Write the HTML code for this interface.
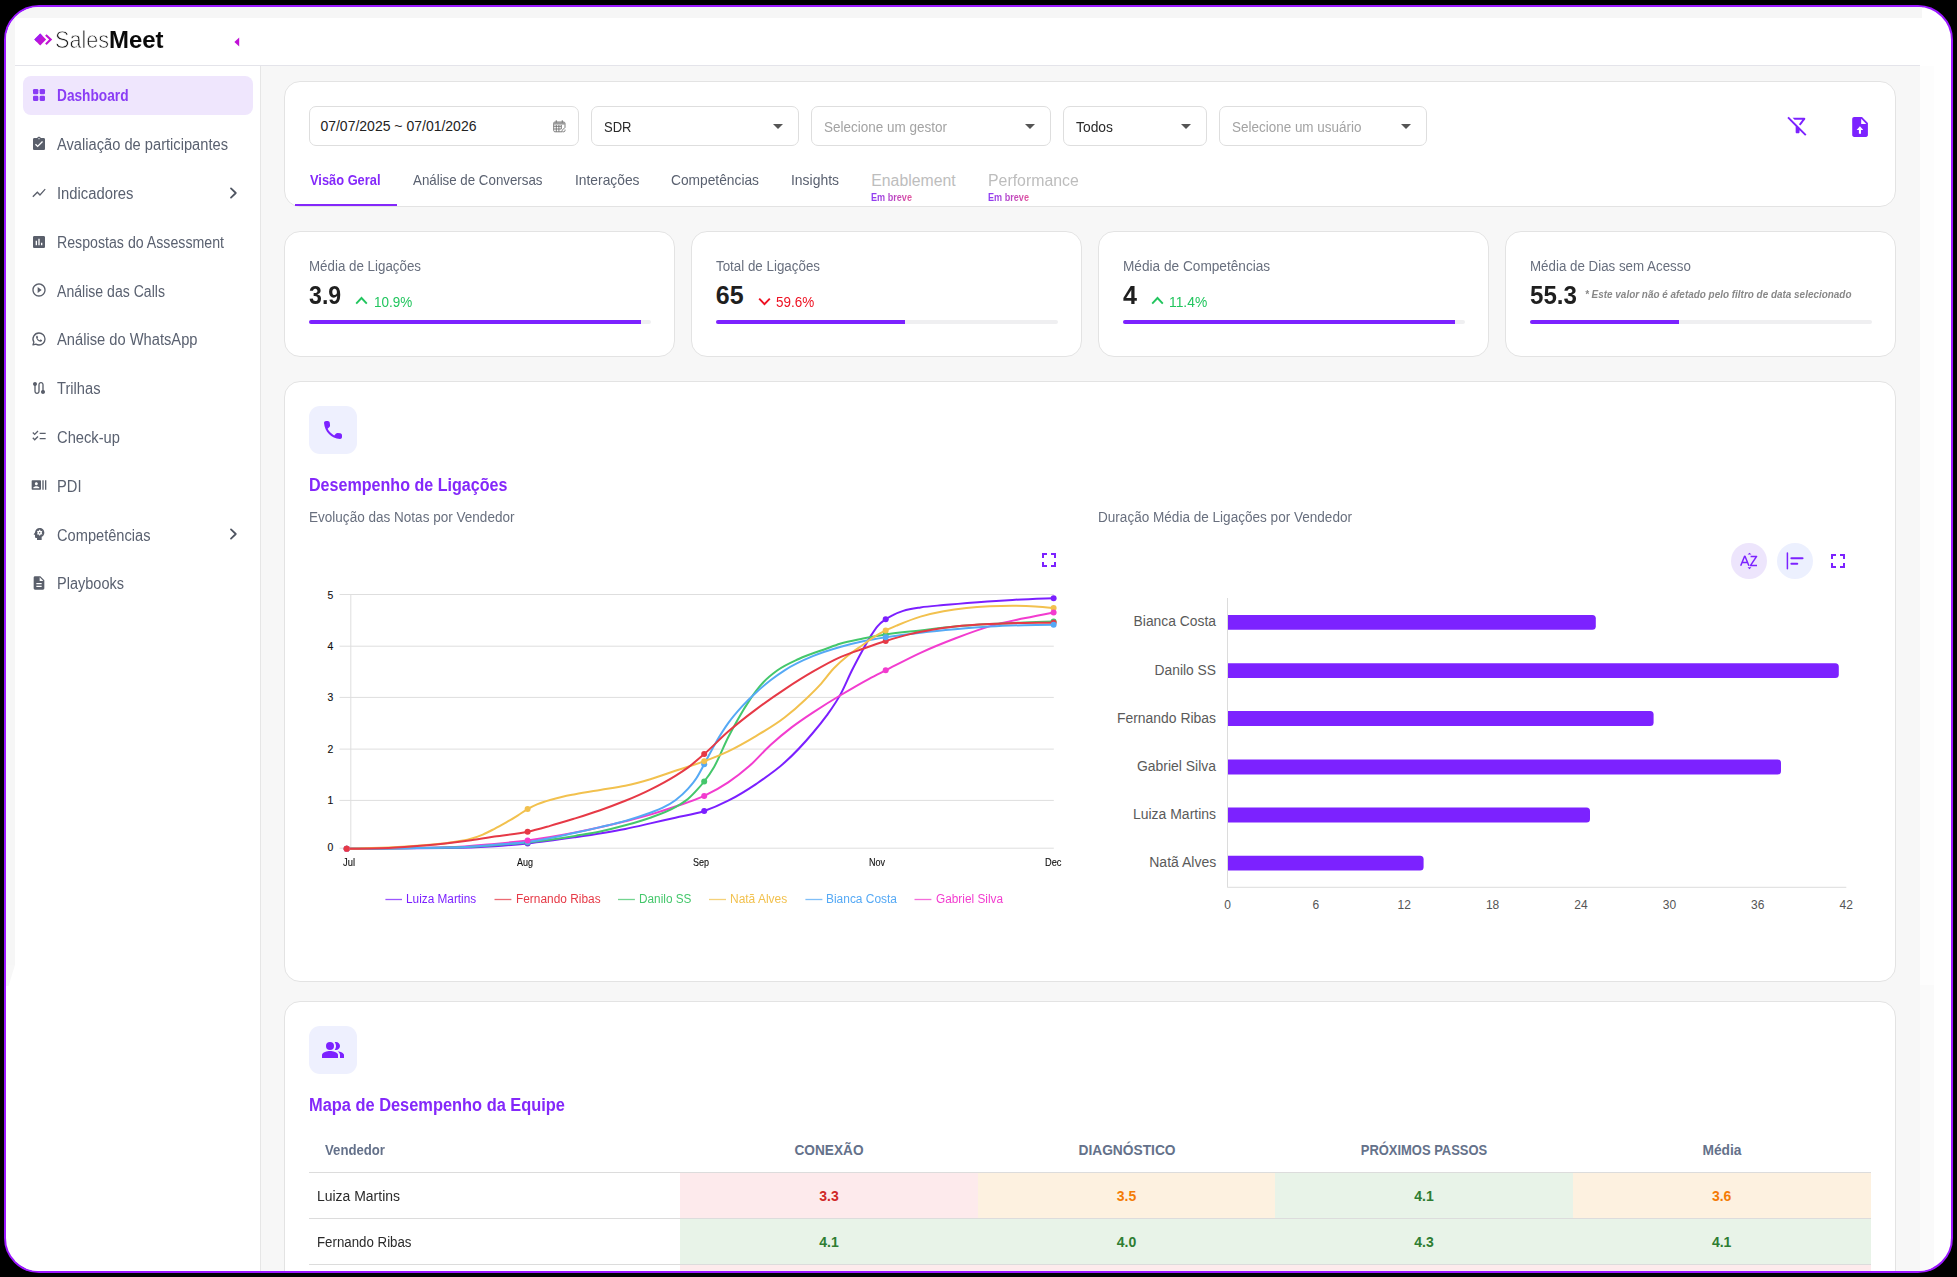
<!DOCTYPE html>
<html lang="pt-BR"><head><meta charset="utf-8"><title>SalesMeet - Dashboard</title>
<style>
*{box-sizing:border-box;margin:0;padding:0}
html,body{width:1957px;height:1277px;overflow:hidden;background:#000;font-family:"Liberation Sans",sans-serif;}
#frame{position:absolute;left:4px;top:5px;width:1949px;height:1268px;border:2px solid #9b18ff;border-radius:35px;background:#fff;overflow:hidden;}
#page{position:absolute;left:-6px;top:-7px;width:1957px;height:1277px;}
.abs{position:absolute}
.t{position:absolute;white-space:nowrap;display:inline-block}
.card{position:absolute;background:#fff;border:1px solid #e3e3e3;border-radius:16px}
.sel{position:absolute;top:106px;height:40px;border:1px solid #dedede;border-radius:7px;background:#fff}
.caret{position:absolute;width:0;height:0;border-left:5px solid transparent;border-right:5px solid transparent;border-top:5px solid #555;top:124px}
.track{position:absolute;height:4px;border-radius:2px;background:#efeff1;overflow:hidden}
.track i{display:block;height:4px;background:#7c22ff}
.ibox{position:absolute;width:48px;height:48px;border-radius:11px;background:#eef0fe}
svg{position:absolute;overflow:visible}
</style></head>
<body><div id="frame"><div id="page">
<div class="abs" style="left:6px;top:7px;width:1916px;height:11px;background:#f6f6f6"></div>
<div class="abs" style="left:6px;top:7px;width:9px;height:958px;background:#f6f6f6"></div>
<svg style="left:6px;top:965px" width="9" height="21" viewBox="0 0 9 21"><polygon points="0,0 9,0 2.500,21 0,21" fill="#f7f7f7"/></svg>
<div class="abs" style="left:261px;top:66px;width:1659px;height:1211px;background:#f7f7f7"></div>
<div class="abs" style="left:1920px;top:66px;width:14px;height:919px;background:#fdfdfd"></div>
<div class="abs" style="left:1920px;top:985px;width:14px;height:292px;background:#fafafa"></div>
<div class="abs" style="left:15px;top:18px;width:1905px;height:48px;background:#fff;border-bottom:1px solid #e4e4ea"></div>
<div class="abs" style="left:15px;top:66px;width:246px;height:1211px;background:#fff;border-right:1px solid #e6e6e6"></div>
<div class="abs" style="left:23px;top:76px;width:230px;height:39px;background:#efe6fd;border-radius:8px"></div>
<svg style="left:33px;top:32px" width="21" height="15" viewBox="33 32 21 15">
<polygon points="34.3,39.6 40.2,33.6 46.1,39.6 40.2,45.6" fill="#c014d4"/>
<polygon points="34.3,39.6 40.2,33.6 42.4,35.8 36.5,41.8" fill="#9a1cf5" opacity=".85"/>
<polygon points="46.6,34.2 52.2,39.6 46.6,45 45.1,43.5 49.1,39.6 45.1,35.7" fill="#c014d4"/>
</svg>
<svg style="left:234px;top:37px" width="6" height="10" viewBox="0 0 6 10"><polygon points="5.2,0.6 5.2,9.4 0.4,5" fill="#c010d6"/></svg>
<div class="card" style="left:284px;top:81px;width:1612px;height:126px"></div>
<div class="sel" style="left:309px;width:270px"></div>
<div class="sel" style="left:591px;width:208px"></div><div class="caret" style="left:773px"></div>
<div class="sel" style="left:811px;width:240px"></div><div class="caret" style="left:1025px"></div>
<div class="sel" style="left:1063px;width:144px"></div><div class="caret" style="left:1181px"></div>
<div class="sel" style="left:1219px;width:208px"></div><div class="caret" style="left:1401px"></div>
<div class="abs" style="left:295px;top:204px;width:102px;height:2px;background:#8428fa"></div>
<div class="card" style="left:284px;top:231px;width:391px;height:126px"></div>
<div class="track" style="left:309px;top:320px;width:341.5px"><i style="width:331.8px"></i></div>
<svg style="left:355.0px;top:296px" width="13" height="9" viewBox="0 0 13 9"><polyline points="1.2,7.6 6.5,2 11.8,7.6" fill="none" stroke="#22c55e" stroke-width="1.9"/></svg>
<div class="card" style="left:691px;top:231px;width:391px;height:126px"></div>
<div class="track" style="left:716px;top:320px;width:341.5px"><i style="width:188.8px"></i></div>
<svg style="left:757.5999999999999px;top:297px" width="13" height="9" viewBox="0 0 13 9"><polyline points="1.2,1.6 6.5,7.2 11.8,1.6" fill="none" stroke="#ee1122" stroke-width="1.9"/></svg>
<div class="card" style="left:1098px;top:231px;width:391px;height:126px"></div>
<div class="track" style="left:1123px;top:320px;width:341.5px"><i style="width:331.8px"></i></div>
<svg style="left:1150.8px;top:296px" width="13" height="9" viewBox="0 0 13 9"><polyline points="1.2,7.6 6.5,2 11.8,7.6" fill="none" stroke="#22c55e" stroke-width="1.9"/></svg>
<div class="card" style="left:1505px;top:231px;width:391px;height:126px"></div>
<div class="track" style="left:1530px;top:320px;width:341.5px"><i style="width:149.1px"></i></div>
<div class="card" style="left:284px;top:381px;width:1612px;height:601px"></div>
<div class="ibox" style="left:309px;top:406px"></div>
<div class="card" style="left:284px;top:1001px;width:1612px;height:400px"></div>
<div class="ibox" style="left:309px;top:1026px"></div>
<svg style="left:0;top:0" width="1957" height="1277" viewBox="0 0 1957 1277">
<line x1="339.5" y1="594.5" x2="1053.8" y2="594.5" stroke="#dedede" stroke-width="1"/>
<line x1="339.5" y1="646.2" x2="1053.8" y2="646.2" stroke="#dedede" stroke-width="1"/>
<line x1="339.5" y1="697.4" x2="1053.8" y2="697.4" stroke="#dedede" stroke-width="1"/>
<line x1="339.5" y1="749.1" x2="1053.8" y2="749.1" stroke="#dedede" stroke-width="1"/>
<line x1="339.5" y1="800.4" x2="1053.8" y2="800.4" stroke="#dedede" stroke-width="1"/>
<line x1="339.5" y1="848.2" x2="1053.8" y2="848.2" stroke="#dedede" stroke-width="1"/>
<line x1="350.8" y1="594.5" x2="350.8" y2="848.2" stroke="#dedede" stroke-width="1"/>
<path d="M346.7,848.7C380.3,848.6 413.9,848.5 447.5,848.0C463.2,847.8 478.8,847.2 494.5,846.2C505.5,845.5 516.6,844.5 527.6,843.4C543.5,841.8 559.3,839.5 575.2,837.2C591.9,834.8 608.6,832.4 625.3,829.0C633.6,827.3 642.0,825.3 650.3,823.4C658.7,821.5 667.0,819.6 675.4,817.7C685.0,815.5 694.6,814.3 704.2,811.0C712.2,808.3 720.2,804.8 728.2,800.7C737.6,795.9 747.0,790.1 756.4,783.8C765.8,777.4 775.2,771.1 784.6,762.6C794.0,754.1 803.4,744.2 812.8,733.0C817.5,727.5 822.1,721.9 826.8,715.4C831.5,708.8 836.2,702.4 840.9,693.6C844.4,687.0 848.0,678.3 851.5,671.2C855.3,663.5 859.2,656.3 863.0,649.4C865.7,644.6 868.3,639.8 871.0,635.6C873.3,632.0 875.6,628.4 877.9,625.8C880.5,622.8 883.1,621.1 885.7,619.3C888.1,617.6 890.5,616.3 892.9,615.1C896.3,613.3 899.8,612.0 903.2,610.9C909.0,609.0 914.7,608.3 920.5,607.4C928.2,606.2 935.8,605.8 943.5,605.1C955.0,604.0 966.5,603.1 978.0,602.2C989.5,601.3 1001.0,600.5 1012.5,599.9C1026.2,599.1 1039.9,598.7 1053.6,598.2" fill="none" stroke="#7b1fff" stroke-width="2" stroke-linecap="round"/>
<path d="M346.7,848.7C380.3,848.5 413.9,848.2 447.5,847.3C463.2,846.9 478.8,845.3 494.5,843.9C505.5,842.9 516.6,841.8 527.6,840.4C543.5,838.3 559.3,835.6 575.2,832.5C591.9,829.3 608.6,825.5 625.3,821.3C633.6,819.2 642.0,817.1 650.3,814.6C658.7,812.1 667.0,809.4 675.4,806.5C685.0,803.2 694.6,800.5 704.2,795.9C712.2,792.1 720.2,787.8 728.2,782.4C735.2,777.7 742.3,772.3 749.3,766.1C756.4,759.9 763.4,751.5 770.5,745.0C777.5,738.6 784.6,732.8 791.6,727.4C798.7,722.0 805.7,717.3 812.8,712.6C822.2,706.4 831.5,700.6 840.9,695.0C850.3,689.4 859.7,683.8 869.1,678.8C874.6,675.8 880.2,673.1 885.7,670.3C897.3,664.4 908.9,658.1 920.5,652.8C932.0,647.5 943.5,642.9 955.0,638.5C966.5,634.1 978.0,629.8 989.5,626.4C1001.0,623.0 1012.5,620.8 1024.0,618.3C1033.9,616.2 1043.7,614.3 1053.6,612.4" fill="none" stroke="#f23ccf" stroke-width="2" stroke-linecap="round"/>
<path d="M346.7,848.7C380.3,848.5 413.9,848.3 447.5,847.6C463.2,847.3 478.8,846.3 494.5,845.2C505.5,844.4 516.6,843.7 527.6,842.5C543.5,840.8 559.3,838.5 575.2,835.9C583.5,834.5 591.9,833.3 600.2,831.5C608.6,829.7 616.9,827.6 625.3,825.3C633.6,823.0 642.0,820.7 650.3,817.7C658.7,814.7 667.0,811.9 675.4,807.1C679.6,804.7 683.7,802.5 687.9,799.0C691.2,796.2 694.6,792.6 697.9,788.9C700.0,786.6 702.1,784.2 704.2,781.5C707.5,777.2 710.8,772.6 714.1,766.9C718.8,758.8 723.5,746.5 728.2,737.3C731.5,730.8 734.8,724.7 738.1,718.9C741.8,712.4 745.6,706.1 749.3,700.6C754.0,693.6 758.7,687.3 763.4,682.3C768.1,677.2 772.8,673.7 777.5,670.3C784.6,665.2 791.6,662.3 798.7,659.0C808.1,654.6 817.4,651.9 826.8,648.5C831.2,646.9 835.6,645.2 840.0,643.8C847.7,641.4 855.3,640.1 863.0,638.5C870.6,636.9 878.1,635.6 885.7,634.4C897.3,632.6 908.9,631.7 920.5,630.4C932.0,629.1 943.5,627.6 955.0,626.6C966.5,625.6 978.0,624.8 989.5,624.1C1001.0,623.4 1012.5,622.8 1024.0,622.4C1033.9,622.0 1043.7,621.8 1053.6,621.6" fill="none" stroke="#44c76b" stroke-width="2" stroke-linecap="round"/>
<path d="M346.7,848.7C380.3,848.5 413.9,848.3 447.5,847.6C463.2,847.3 478.8,846.0 494.5,844.8C505.5,844.0 516.6,843.4 527.6,842.0C543.5,840.0 559.3,836.2 575.2,832.8C583.5,831.0 591.9,829.1 600.2,827.1C608.6,825.1 616.9,823.3 625.3,820.9C633.6,818.5 642.0,815.8 650.3,812.7C654.5,811.1 658.6,809.8 662.8,807.7C667.0,805.6 671.2,803.4 675.4,800.2C679.6,797.1 683.7,793.6 687.9,788.9C690.8,785.6 693.8,782.3 696.7,777.7C699.2,773.8 701.7,768.8 704.2,764.2C707.5,758.2 710.8,751.5 714.1,745.7C718.8,737.4 723.5,729.8 728.2,723.2C732.9,716.6 737.6,711.4 742.3,706.2C747.0,701.0 751.7,696.5 756.4,692.2C761.1,687.9 765.8,683.9 770.5,680.2C775.2,676.6 779.9,673.3 784.6,670.3C794.0,664.3 803.4,660.1 812.8,656.2C822.2,652.3 831.5,649.5 840.9,646.8C848.3,644.7 855.6,642.9 863.0,641.3C870.6,639.7 878.1,638.5 885.7,637.3C897.3,635.5 908.9,634.0 920.5,632.7C932.0,631.4 943.5,630.3 955.0,629.3C966.5,628.3 978.0,627.3 989.5,626.6C1001.0,625.9 1012.5,625.5 1024.0,625.2C1033.9,624.9 1043.7,624.8 1053.6,624.7" fill="none" stroke="#55a9f5" stroke-width="2" stroke-linecap="round"/>
<path d="M346.7,848.7C360.7,848.5 374.8,848.3 388.8,847.6C400.5,847.0 412.3,846.2 424.0,845.2C431.8,844.5 439.7,844.0 447.5,842.9C455.3,841.8 463.2,841.1 471.0,838.8C474.9,837.6 478.9,836.3 482.8,834.6C486.7,832.9 490.6,830.8 494.5,828.8C498.4,826.7 502.4,824.6 506.3,822.3C510.2,820.1 514.1,817.7 518.0,815.3C521.2,813.3 524.4,810.9 527.6,809.1C530.9,807.2 534.3,805.6 537.6,804.2C541.8,802.4 545.9,801.2 550.1,800.0C554.3,798.8 558.4,797.7 562.6,796.7C566.8,795.7 571.0,795.0 575.2,794.2C583.5,792.6 591.9,791.3 600.2,789.9C608.6,788.5 616.9,787.6 625.3,785.8C633.6,784.0 642.0,781.7 650.3,779.2C658.7,776.7 667.0,773.6 675.4,770.8C685.0,767.6 694.6,764.8 704.2,761.2C712.2,758.2 720.2,755.1 728.2,751.3C737.6,746.8 747.0,741.4 756.4,735.8C765.8,730.2 775.2,724.8 784.6,717.5C791.6,712.1 798.7,705.9 805.7,699.2C810.4,694.7 815.1,690.3 819.8,685.1C824.5,679.9 829.2,673.1 833.9,668.2C838.6,663.3 843.3,659.3 848.0,655.5C853.0,651.5 858.0,648.3 863.0,644.8C866.8,642.1 870.7,639.1 874.5,636.7C878.2,634.3 882.0,632.3 885.7,630.4C889.6,628.4 893.6,626.8 897.5,625.2C905.2,622.0 912.8,618.9 920.5,616.6C928.2,614.3 935.8,612.6 943.5,611.2C951.2,609.8 958.8,608.8 966.5,608.0C974.2,607.2 981.8,606.7 989.5,606.3C997.2,605.9 1004.8,605.7 1012.5,605.7C1020.1,605.7 1027.8,605.9 1035.4,606.4C1041.5,606.8 1047.5,607.4 1053.6,608.0" fill="none" stroke="#f2c14e" stroke-width="2" stroke-linecap="round"/>
<path d="M346.7,848.7C360.7,848.6 374.8,848.4 388.8,847.9C400.5,847.5 412.3,846.6 424.0,845.6C431.8,844.9 439.7,844.1 447.5,843.2C455.3,842.3 463.2,841.3 471.0,840.2C478.8,839.1 486.7,837.8 494.5,836.6C505.5,834.9 516.6,834.2 527.6,831.8C535.1,830.2 542.6,828.0 550.1,825.9C558.5,823.6 566.8,821.0 575.2,818.4C583.5,815.8 591.9,813.1 600.2,810.2C608.6,807.3 616.9,804.2 625.3,800.8C633.6,797.4 642.0,793.8 650.3,789.6C658.7,785.4 667.0,781.0 675.4,775.8C679.6,773.2 683.7,770.6 687.9,767.6C693.3,763.6 698.8,758.8 704.2,754.1C712.2,747.1 720.2,738.6 728.2,731.6C737.6,723.4 747.0,716.1 756.4,709.1C765.8,702.0 775.2,695.5 784.6,689.3C794.0,683.1 803.4,677.1 812.8,671.7C822.2,666.3 831.5,661.0 840.9,656.9C848.3,653.7 855.6,651.4 863.0,648.8C870.6,646.1 878.1,643.4 885.7,641.0C893.5,638.6 901.2,636.3 909.0,634.4C916.7,632.5 924.3,631.1 932.0,629.8C939.7,628.5 947.3,627.5 955.0,626.6C966.5,625.3 978.0,624.7 989.5,624.1C1001.0,623.5 1012.5,623.1 1024.0,622.9C1033.9,622.8 1043.7,622.7 1053.6,622.7" fill="none" stroke="#e63946" stroke-width="2" stroke-linecap="round"/>
<circle cx="346.7" cy="848.7" r="3" fill="#7b1fff"/>
<circle cx="527.6" cy="843.4" r="3" fill="#7b1fff"/>
<circle cx="704.2" cy="811" r="3" fill="#7b1fff"/>
<circle cx="885.7" cy="619.3" r="3" fill="#7b1fff"/>
<circle cx="1053.6" cy="598.2" r="3" fill="#7b1fff"/>
<circle cx="346.7" cy="848.7" r="3" fill="#44c76b"/>
<circle cx="527.6" cy="842.5" r="3" fill="#44c76b"/>
<circle cx="704.2" cy="781.5" r="3" fill="#44c76b"/>
<circle cx="885.7" cy="634.4" r="3" fill="#44c76b"/>
<circle cx="1053.6" cy="621.6" r="3" fill="#44c76b"/>
<circle cx="346.7" cy="848.7" r="3" fill="#e63946"/>
<circle cx="527.6" cy="831.8" r="3" fill="#e63946"/>
<circle cx="704.2" cy="754.1" r="3" fill="#e63946"/>
<circle cx="885.7" cy="641" r="3" fill="#e63946"/>
<circle cx="1053.6" cy="622.7" r="3" fill="#e63946"/>
<circle cx="346.7" cy="848.7" r="3" fill="#55a9f5"/>
<circle cx="527.6" cy="842" r="3" fill="#55a9f5"/>
<circle cx="704.2" cy="764.2" r="3" fill="#55a9f5"/>
<circle cx="885.7" cy="637.3" r="3" fill="#55a9f5"/>
<circle cx="1053.6" cy="624.7" r="3" fill="#55a9f5"/>
<circle cx="346.7" cy="848.7" r="3" fill="#f2c14e"/>
<circle cx="527.6" cy="809.1" r="3" fill="#f2c14e"/>
<circle cx="704.2" cy="761.2" r="3" fill="#f2c14e"/>
<circle cx="885.7" cy="630.4" r="3" fill="#f2c14e"/>
<circle cx="1053.6" cy="608" r="3" fill="#f2c14e"/>
<circle cx="346.7" cy="848.7" r="3" fill="#f23ccf"/>
<circle cx="527.6" cy="840.4" r="3" fill="#f23ccf"/>
<circle cx="704.2" cy="795.9" r="3" fill="#f23ccf"/>
<circle cx="885.7" cy="670.3" r="3" fill="#f23ccf"/>
<circle cx="1053.6" cy="612.4" r="3" fill="#f23ccf"/>
<circle cx="346.7" cy="848.7" r="3" fill="#e63946"/>
<line x1="385.4" y1="899.5" x2="402" y2="899.5" stroke="#7b1fff" stroke-width="1.3" stroke-opacity=".75"/>
<line x1="494.5" y1="899.5" x2="511.4" y2="899.5" stroke="#e63946" stroke-width="1.3" stroke-opacity=".75"/>
<line x1="618" y1="899.5" x2="634.9" y2="899.5" stroke="#44c76b" stroke-width="1.3" stroke-opacity=".75"/>
<line x1="709" y1="899.5" x2="726" y2="899.5" stroke="#f2c14e" stroke-width="1.3" stroke-opacity=".75"/>
<line x1="805.4" y1="899.5" x2="822.4" y2="899.5" stroke="#55a9f5" stroke-width="1.3" stroke-opacity=".75"/>
<line x1="914.5" y1="899.5" x2="931.4" y2="899.5" stroke="#f23ccf" stroke-width="1.3" stroke-opacity=".75"/>
<line x1="1227.5" y1="598" x2="1227.5" y2="887.5" stroke="#dcdcdc" stroke-width="1"/>
<line x1="1227.5" y1="887.3" x2="1846.3" y2="887.3" stroke="#dcdcdc" stroke-width="1"/>
<path d="M1228.0,615.0H1592.3Q1595.8,615.0 1595.8,618.5V626.3Q1595.8,629.8 1592.3,629.8H1228.0Z" fill="#7c22ff"/>
<path d="M1228.0,663.2H1835.3Q1838.8,663.2 1838.8,666.7V674.5Q1838.8,678.0 1835.3,678.0H1228.0Z" fill="#7c22ff"/>
<path d="M1228.0,711.1H1650.1Q1653.6,711.1 1653.6,714.6V722.4Q1653.6,725.9 1650.1,725.9H1228.0Z" fill="#7c22ff"/>
<path d="M1228.0,759.6H1777.5Q1781,759.6 1781,763.1V770.9Q1781,774.4 1777.5,774.4H1228.0Z" fill="#7c22ff"/>
<path d="M1228.0,807.6H1586.5Q1590,807.6 1590,811.1V818.9Q1590,822.4 1586.5,822.4H1228.0Z" fill="#7c22ff"/>
<path d="M1228.0,855.8000000000001H1420.1Q1423.6,855.8000000000001 1423.6,859.3000000000001V867.1Q1423.6,870.6 1420.1,870.6H1228.0Z" fill="#7c22ff"/>
</svg>
<div class="abs" style="left:680.2px;top:1172.5px;width:297.5px;height:45.9px;background:#fdeaec"></div>
<div class="abs" style="left:977.7px;top:1172.5px;width:297.5px;height:45.9px;background:#fdf1e0"></div>
<div class="abs" style="left:1275.2px;top:1172.5px;width:297.5px;height:45.9px;background:#e8f3e8"></div>
<div class="abs" style="left:1572.7px;top:1172.5px;width:297.9px;height:45.9px;background:#fdf1e0"></div>
<div class="abs" style="left:680.2px;top:1218.4px;width:297.5px;height:46.0px;background:#e8f3e8"></div>
<div class="abs" style="left:977.7px;top:1218.4px;width:297.5px;height:46.0px;background:#e8f3e8"></div>
<div class="abs" style="left:1275.2px;top:1218.4px;width:297.5px;height:46.0px;background:#e8f3e8"></div>
<div class="abs" style="left:1572.7px;top:1218.4px;width:297.9px;height:46.0px;background:#e8f3e8"></div>
<div class="abs" style="left:680.2px;top:1264.4px;width:297.5px;height:46.0px;background:#fdeaec"></div>
<div class="abs" style="left:977.7px;top:1264.4px;width:297.5px;height:46.0px;background:#fdeaec"></div>
<div class="abs" style="left:1275.2px;top:1264.4px;width:297.5px;height:46.0px;background:#fdeaec"></div>
<div class="abs" style="left:1572.7px;top:1264.4px;width:297.9px;height:46.0px;background:#fdeaec"></div>
<div class="abs" style="left:309px;top:1171.8px;width:1562px;height:1px;background:#dcdcdc"></div>
<div class="abs" style="left:309px;top:1217.8px;width:1562px;height:1px;background:#dcdcdc"></div>
<div class="abs" style="left:309px;top:1263.8px;width:1562px;height:1px;background:#dcdcdc"></div>
<svg style="left:31px;top:87.4px" width="16" height="16" viewBox="0 0 24 24"><g fill="#8a3cf5"><rect x="3" y="3" width="8" height="8" rx="2"/><rect x="13" y="3" width="8" height="8" rx="2"/><rect x="3" y="13" width="8" height="8" rx="2"/><rect x="13" y="13" width="8" height="8" rx="2"/></g></svg>
<svg style="left:31px;top:136.12px" width="16" height="16" viewBox="0 0 24 24"><path d="M19 3h-4.18C14.4 1.84 13.3 1 12 1c-1.3 0-2.4.84-2.82 2H5c-1.1 0-2 .9-2 2v14c0 1.1.9 2 2 2h14c1.1 0 2-.9 2-2V5c0-1.1-.9-2-2-2zm-7 0c.55 0 1 .45 1 1s-.45 1-1 1-1-.45-1-1 .45-1 1-1zm-2 14l-4-4 1.41-1.41L10 14.17l6.59-6.59L18 9l-8 8z" fill="#5a5f6b" /></svg>
<svg style="left:31px;top:184.84px" width="16" height="16" viewBox="0 0 24 24"><path d="M3.5 18.49l6-6.01 4 4L22 6.92l-1.41-1.41-7.09 7.97-4-4L2 16.99z" fill="#5a5f6b" /></svg>
<svg style="left:31px;top:233.56px" width="16" height="16" viewBox="0 0 24 24"><path d="M19 3H5c-1.1 0-2 .9-2 2v14c0 1.1.9 2 2 2h14c1.1 0 2-.9 2-2V5c0-1.1-.9-2-2-2zM9 17H7v-7h2v7zm4 0h-2V7h2v10zm4 0h-2v-4h2v4z" fill="#5a5f6b" /></svg>
<svg style="left:31px;top:282.28px" width="16" height="16" viewBox="0 0 24 24"><path d="M10 16.5l6-4.5-6-4.5v9zM12 2C6.48 2 2 6.48 2 12s4.48 10 10 10 10-4.48 10-10S17.52 2 12 2zm0 18c-4.41 0-8-3.59-8-8s3.59-8 8-8 8 3.59 8 8-3.59 8-8 8z" fill="#5a5f6b" /></svg>
<svg style="left:31px;top:331.0px" width="16" height="16" viewBox="0 0 24 24">
<path d="M12 3a9 9 0 0 1 0 18c-1.7 0-3.3-.47-4.65-1.3L3 20.9l1.3-4.2A9 9 0 0 1 12 3z" fill="none" stroke="#5a5f6b" stroke-width="2" stroke-linejoin="round"/>
<path d="M8.6 7.2c.5-.3 1-.2 1.200.3l.7 1.700c.100.3 0 .6-.2.800l-.6.7c.7 1.400 1.800 2.400 3.200 3.100l.8-.8c.2-.2.500-.3.800-.2l1.700.8c.4.200.5.600.3 1.100-.4 1-1.300 1.500-2.300 1.300-3.500-.6-6.100-3.300-6.600-6.700-.1-.9.3-1.700 1-2.100z" fill="#5a5f6b"/></svg>
<svg style="left:31px;top:379.72px" width="16" height="16" viewBox="0 0 24 24"><path d="M19 15.18V7c0-2.21-1.79-4-4-4s-4 1.79-4 4v10c0 1.1-.9 2-2 2s-2-.9-2-2V8.82C8.16 8.4 9 7.3 9 6c0-1.66-1.34-3-3-3S3 4.34 3 6c0 1.3.84 2.4 2 2.82V17c0 2.21 1.79 4 4 4s4-1.79 4-4V7c0-1.1.9-2 2-2s2 .9 2 2v8.18c-1.16.41-2 1.51-2 2.82 0 1.66 1.34 3 3 3s3-1.34 3-3c0-1.3-.84-2.4-2-2.82z" fill="#5a5f6b" /></svg>
<svg style="left:31px;top:428.43999999999994px" width="16" height="16" viewBox="0 0 24 24"><path d="M22 7h-9v2h9V7zm0 8h-9v2h9v-2zM5.54 11L2 7.46l1.41-1.41 2.12 2.12 4.24-4.24 1.41 1.41L5.54 11zm0 8L2 15.46l1.41-1.41 2.12 2.12 4.24-4.24 1.41 1.41L5.54 19z" fill="#5a5f6b" /></svg>
<svg style="left:31px;top:477.15999999999997px" width="16" height="16" viewBox="0 0 24 24"><path d="M21 5v14h2V5h-2zm-4 14h2V5h-2v14zM14 5H2c-.55 0-1 .45-1 1v12c0 .55.45 1 1 1h12c.55 0 1-.45 1-1V6c0-.55-.45-1-1-1zM8 7.75c1.24 0 2.25 1.01 2.25 2.25S9.24 12.25 8 12.25 5.75 11.24 5.75 10 6.76 7.75 8 7.75zM12.5 17h-9v-.75c0-1.5 3-2.25 4.500-2.25s4.500.75 4.500 2.250V17z" fill="#5a5f6b" /></svg>
<svg style="left:31px;top:525.88px" width="16" height="16" viewBox="0 0 24 24">
<path d="M13 3C9.200 3 6.200 5.900 6 9.700L4.100 12.300c-.2.300 0 .7.400.7H6v3c0 1.100.9 2 2 2h1v3h7v-4.700c2.400-1.100 4-3.500 4-6.300 0-3.900-3.100-7-7-7z" fill="#5a5f6b"/>
<circle cx="13" cy="10" r="3.300" fill="#fff"/><circle cx="13" cy="10" r="1.300" fill="#5a5f6b"/>
<g stroke="#fff" stroke-width="1.500"><line x1="13" y1="5.600" x2="13" y2="14.400"/><line x1="9.200" y1="7.800" x2="16.800" y2="12.200"/><line x1="9.200" y1="12.200" x2="16.800" y2="7.800"/></g>
<circle cx="13" cy="10" r="2.500" fill="#fff"/><circle cx="13" cy="10" r="1.100" fill="#5a5f6b"/></svg>
<svg style="left:31px;top:574.6px" width="16" height="16" viewBox="0 0 24 24"><path d="M14 2H6c-1.1 0-1.99.9-1.99 2L4 20c0 1.1.89 2 1.99 2H18c1.1 0 2-.9 2-2V8l-6-6zm2 16H8v-2h8v2zm0-4H8v-2h8v2zm-3-5V3.5L18.5 9H13z" fill="#5a5f6b" /></svg>
<svg style="left:228px;top:186.1px" width="12" height="14" viewBox="0 0 12 14"><polyline points="3,2.400 7.800,7 3,11.600" fill="none" stroke="#4f5562" stroke-width="1.800" stroke-linecap="round" stroke-linejoin="round"/></svg>
<svg style="left:228px;top:527.35px" width="12" height="14" viewBox="0 0 12 14"><polyline points="3,2.400 7.800,7 3,11.600" fill="none" stroke="#4f5562" stroke-width="1.800" stroke-linecap="round" stroke-linejoin="round"/></svg>
<svg style="left:553px;top:120px" width="13" height="13" viewBox="0 0 13 13"><g fill="none" stroke="#707070" stroke-width="0.9">
<path d="M9.2 11.800H1.900c-.66 0-1.200-.54-1.200-1.200V3.200C.700 2.540 1.240 2 1.900 2h8.900c.66 0 1.200.54 1.200 1.200V7.300"/>
<line x1="0.700" y1="6.300" x2="8.300" y2="6.300"/><line x1="0.700" y1="9" x2="8.300" y2="9"/><line x1="3.300" y1="5" x2="3.300" y2="11.800"/><line x1="5.900" y1="5" x2="5.900" y2="11.800"/><line x1="8.300" y1="5" x2="8.300" y2="9"/>
<path d="M12 7.300c0 1.500-3 1-3 4.500M12 9.600v1c0 .66-.54 1.200-1.200 1.200H9.700"/></g>
<rect x="0.700" y="2" width="11.300" height="2.600" fill="#9c9c9c"/><rect x="2.700" y="0.300" width="1.200" height="2.400" fill="#808080"/><rect x="8.700" y="0.300" width="1.200" height="2.400" fill="#808080"/></svg>
<svg style="left:1786.3px;top:114.4px" width="23.2" height="23.2" viewBox="0 0 24 24"><path d="m16.95 6-3.57 4.550 1.430 1.430c1.030-1.310 4.980-6.370 4.980-6.370C20.300 4.950 19.830 4 19 4H6.830l2 2h8.120zM2.810 2.810 1.390 4.220 10 13v6c0 .55.45 1 1 1h2c.55 0 1-.45 1-1v-2.170l5.780 5.780 1.410-1.410L2.810 2.810z" fill="#7c22ff" /></svg>
<svg style="left:1850px;top:115px" width="20" height="24" viewBox="1850 115 20 24">
<path d="M1854.100 117H1862l5.900 5.900V135c0 1.050-.85 1.900-1.900 1.900h-11.900c-1.050 0-1.900-.85-1.900-1.900v-16.100c0-1.050.85-1.900 1.900-1.900z" fill="#7c22ff"/>
<path d="M1861.200 118.800v5.100h5.100z" fill="#fff"/>
<path d="M1859.950 126.200l3.300 3.700h-2.250v3.900h-2.100v-3.900h-2.250z" fill="#fff"/></svg>
<svg style="left:321px;top:418px" width="24" height="24" viewBox="0 0 24 24"><path d="M19.230 15.260l-2.540-.29c-.61-.07-1.210.14-1.640.57l-1.840 1.840c-2.830-1.440-5.150-3.750-6.590-6.590l1.850-1.850c.43-.43.64-1.030.57-1.640l-.29-2.520c-.12-1.010-.97-1.770-1.990-1.770H5.030c-1.130 0-2.070.94-2 2.070.53 8.540 7.360 15.360 15.890 15.890 1.130.07 2.070-.87 2.070-2v-1.730c.01-1.010-.75-1.860-1.760-1.980z" fill="#7c22ff" /></svg>
<svg style="left:321px;top:1038px" width="24" height="24" viewBox="0 0 24 24"><g fill="#7c22ff">
<path d="M16.670,13.130C18.040,14.060,19,15.320,19,17v3h4v-3C23,14.820,19.430,13.530,16.670,13.130z"/>
<path d="M15,12c2.210,0,4-1.790,4-4c0-2.210-1.790-4-4-4c-0.470,0-0.910,0.100-1.330,0.240C14.500,5.270,15,6.580,15,8s-0.500,2.730-1.330,3.760C14.090,11.900,14.530,12,15,12z"/>
<circle cx="9" cy="8" r="4"/><path d="M9,13c-2.670,0-8,1.340-8,4v3h16v-3C17,14.340,11.670,13,9,13z"/></g></svg>
<svg style="left:1042px;top:553px" width="14" height="14" viewBox="0 0 14 14"><path d="M1,5V1H5M9,1H13V5M13,9V13H9M5,13H1V9" fill="none" stroke="#7c22ff" stroke-width="2"/></svg>
<svg style="left:1831px;top:554px" width="14" height="14" viewBox="0 0 14 14"><path d="M1,5V1H5M9,1H13V5M13,9V13H9M5,13H1V9" fill="none" stroke="#7c22ff" stroke-width="2"/></svg>
<div class="abs" style="left:1731px;top:543px;width:36px;height:36px;border-radius:18px;background:#ede5fc"></div>
<div class="abs" style="left:1777px;top:543px;width:36px;height:36px;border-radius:18px;background:#ecf0fe"></div>
<svg style="left:1738px;top:551px" width="22" height="20" viewBox="1738 551 22 20"><g fill="none" stroke="#7c22ff" stroke-width="1.500" stroke-linejoin="round">
<path d="M1740.700 565.700l3.900-9.500h.4l3.900 9.500M1742.200 562.500h5.400"/><path d="M1750.600 556.400h6l-6.200 9.200h6.600"/></g>
<path d="M1749.500 552.700l1.900 1.900h-3.800z" fill="#7c22ff"/><path d="M1749.500 569.200l1.900-1.900h-3.800z" fill="#7c22ff"/></svg>
<svg style="left:1784px;top:551px" width="22" height="20" viewBox="1784 551 22 20"><g stroke="#7c22ff" stroke-linecap="round">
<line x1="1787.400" y1="553" x2="1787.400" y2="568.700" stroke-width="1.500"/><line x1="1791.400" y1="558.200" x2="1802.500" y2="558.200" stroke-width="2.100"/><line x1="1791.400" y1="563.800" x2="1797.200" y2="563.800" stroke-width="2.100"/></g></svg>
<span class="t" id="t0" style="top:25.25px;font-size:24.2px;line-height:29.04px;color:#1c1c1c;left:55.0px;transform-origin:0 50%;transform:scaleX(0.8956);-webkit-text-stroke:0.75px #fff;">Sales</span>
<span class="t" id="t1" style="top:26.25px;font-size:23.5px;line-height:28.2px;color:#0a0a0a;font-weight:700;left:109.4px;transform-origin:0 50%;transform:scaleX(1.0197);">Meet</span>
<span class="t" id="t2" style="top:87.25px;font-size:15.6px;line-height:18.72px;color:#8a3df5;font-weight:700;left:57px;transform-origin:0 50%;transform:scaleX(0.8778);">Dashboard</span>
<span class="t" id="t3" style="top:136.25px;font-size:15.6px;line-height:18.72px;color:#5a6170;left:57px;transform-origin:0 50%;transform:scaleX(0.9408);">Avaliação de participantes</span>
<span class="t" id="t4" style="top:185.25px;font-size:15.6px;line-height:18.72px;color:#5a6170;left:57px;transform-origin:0 50%;transform:scaleX(0.9488);">Indicadores</span>
<span class="t" id="t5" style="top:234.25px;font-size:15.6px;line-height:18.72px;color:#5a6170;left:57px;transform-origin:0 50%;transform:scaleX(0.9088);">Respostas do Assessment</span>
<span class="t" id="t6" style="top:283.25px;font-size:15.6px;line-height:18.72px;color:#5a6170;left:57px;transform-origin:0 50%;transform:scaleX(0.9028);">Análise das Calls</span>
<span class="t" id="t7" style="top:331.25px;font-size:15.6px;line-height:18.72px;color:#5a6170;left:57px;transform-origin:0 50%;transform:scaleX(0.9424);">Análise do WhatsApp</span>
<span class="t" id="t8" style="top:380.25px;font-size:15.6px;line-height:18.72px;color:#5a6170;left:57px;transform-origin:0 50%;transform:scaleX(0.9412);">Trilhas</span>
<span class="t" id="t9" style="top:429.25px;font-size:15.6px;line-height:18.72px;color:#5a6170;left:57px;transform-origin:0 50%;transform:scaleX(0.9438);">Check-up</span>
<span class="t" id="t10" style="top:478.25px;font-size:15.6px;line-height:18.72px;color:#5a6170;left:57px;transform-origin:0 50%;transform:scaleX(0.9423);">PDI</span>
<span class="t" id="t11" style="top:527.25px;font-size:15.6px;line-height:18.72px;color:#5a6170;left:57px;transform-origin:0 50%;transform:scaleX(0.9379);">Competências</span>
<span class="t" id="t12" style="top:575.25px;font-size:15.6px;line-height:18.72px;color:#5a6170;left:57px;transform-origin:0 50%;transform:scaleX(0.9312);">Playbooks</span>
<span class="t" id="t13" style="top:118.25px;font-size:14px;line-height:16.8px;color:#222;left:320.4px;transform-origin:0 50%;">07/07/2025 ~ 07/01/2026</span>
<span class="t" id="t14" style="top:119.25px;font-size:14px;line-height:16.8px;color:#2a2a2a;left:604px;transform-origin:0 50%;transform:scaleX(0.9302);">SDR</span>
<span class="t" id="t15" style="top:119.25px;font-size:14px;line-height:16.8px;color:#a3a3a3;left:824px;transform-origin:0 50%;transform:scaleX(0.9636);">Selecione um gestor</span>
<span class="t" id="t16" style="top:119.25px;font-size:14px;line-height:16.8px;color:#2a2a2a;left:1076px;transform-origin:0 50%;transform:scaleX(0.9904);">Todos</span>
<span class="t" id="t17" style="top:119.25px;font-size:14px;line-height:16.8px;color:#a3a3a3;left:1232px;transform-origin:0 50%;transform:scaleX(0.9618);">Selecione um usuário</span>
<span class="t" id="t18" style="top:171.25px;font-size:15px;line-height:18.0px;color:#8428fa;font-weight:700;left:310px;transform-origin:0 50%;transform:scaleX(0.8568);">Visão Geral</span>
<span class="t" id="t19" style="top:171.25px;font-size:15px;line-height:18.0px;color:#5a6170;left:413px;transform-origin:0 50%;transform:scaleX(0.8875);">Análise de Conversas</span>
<span class="t" id="t20" style="top:171.25px;font-size:15px;line-height:18.0px;color:#5a6170;left:575px;transform-origin:0 50%;transform:scaleX(0.9208);">Interações</span>
<span class="t" id="t21" style="top:171.25px;font-size:15px;line-height:18.0px;color:#5a6170;left:671px;transform-origin:0 50%;transform:scaleX(0.9177);">Competências</span>
<span class="t" id="t22" style="top:171.25px;font-size:15px;line-height:18.0px;color:#5a6170;left:791px;transform-origin:0 50%;transform:scaleX(0.9284);">Insights</span>
<span class="t" id="t23" style="top:172.25px;font-size:15.8px;line-height:18.96px;color:#bdbdbd;left:871.3px;transform-origin:0 50%;">Enablement</span>
<span class="t" id="t24" style="top:172.25px;font-size:15.8px;line-height:18.96px;color:#bdbdbd;left:987.6px;transform-origin:0 50%;transform:scaleX(1.0040);">Performance</span>
<span class="t" id="t25" style="top:192.25px;font-size:10px;line-height:12.0px;color:transparent;font-weight:700;left:871.3px;transform-origin:0 50%;transform:scaleX(0.9105);background:linear-gradient(90deg,#8b3bf6,#e2509a);-webkit-background-clip:text;background-clip:text;">Em breve</span>
<span class="t" id="t26" style="top:192.25px;font-size:10px;line-height:12.0px;color:transparent;font-weight:700;left:987.6px;transform-origin:0 50%;transform:scaleX(0.9105);background:linear-gradient(90deg,#8b3bf6,#e2509a);-webkit-background-clip:text;background-clip:text;">Em breve</span>
<span class="t" id="t27" style="top:258.25px;font-size:14px;line-height:16.8px;color:#686f7e;left:308.8px;transform-origin:0 50%;transform:scaleX(0.9529);">Média de Ligações</span>
<span class="t" id="t28" style="top:280.25px;font-size:25px;line-height:30.0px;color:#1f1f1f;font-weight:700;left:308.8px;transform-origin:0 50%;transform:scaleX(0.9262);">3.9</span>
<span class="t" id="t29" style="top:295.25px;font-size:13.8px;line-height:16.56px;color:#22c55e;left:373.5px;transform-origin:0 50%;transform:scaleX(0.9764);">10.9%</span>
<span class="t" id="t30" style="top:258.25px;font-size:14px;line-height:16.8px;color:#686f7e;left:715.8px;transform-origin:0 50%;transform:scaleX(0.9544);">Total de Ligações</span>
<span class="t" id="t31" style="top:280.25px;font-size:25px;line-height:30.0px;color:#1f1f1f;font-weight:700;left:715.8px;transform-origin:0 50%;">65</span>
<span class="t" id="t32" style="top:295.25px;font-size:13.8px;line-height:16.56px;color:#ee1122;left:776.0999999999999px;transform-origin:0 50%;transform:scaleX(0.9764);">59.6%</span>
<span class="t" id="t33" style="top:258.25px;font-size:14px;line-height:16.8px;color:#686f7e;left:1122.8px;transform-origin:0 50%;transform:scaleX(0.9749);">Média de Competências</span>
<span class="t" id="t34" style="top:280.25px;font-size:25px;line-height:30.0px;color:#1f1f1f;font-weight:700;left:1122.8px;transform-origin:0 50%;transform:scaleX(1.0067);">4</span>
<span class="t" id="t35" style="top:295.25px;font-size:13.8px;line-height:16.56px;color:#22c55e;left:1169.3px;transform-origin:0 50%;transform:scaleX(1.0024);">11.4%</span>
<span class="t" id="t36" style="top:258.25px;font-size:14px;line-height:16.8px;color:#686f7e;left:1529.8px;transform-origin:0 50%;transform:scaleX(0.9523);">Média de Dias sem Acesso</span>
<span class="t" id="t37" style="top:280.25px;font-size:25px;line-height:30.0px;color:#1f1f1f;font-weight:700;left:1529.8px;transform-origin:0 50%;transform:scaleX(0.9657);">55.3</span>
<span class="t" id="t38" style="top:288.25px;font-size:11px;line-height:13.2px;color:#888;font-weight:700;font-style:italic;left:1585.4px;transform-origin:0 50%;transform:scaleX(0.9026);">* Este valor não é afetado pelo filtro de data selecionado</span>
<span class="t" id="t39" style="top:475.25px;font-size:18px;line-height:21.6px;color:#8428fa;font-weight:700;left:309px;transform-origin:0 50%;transform:scaleX(0.8938);">Desempenho de Ligações</span>
<span class="t" id="t40" style="top:509.25px;font-size:14px;line-height:16.8px;color:#686f7e;left:309px;transform-origin:0 50%;transform:scaleX(0.9671);">Evolução das Notas por Vendedor</span>
<span class="t" id="t41" style="top:509.25px;font-size:14px;line-height:16.8px;color:#686f7e;left:1097.7px;transform-origin:0 50%;transform:scaleX(0.9684);">Duração Média de Ligações por Vendedor</span>
<span class="t" id="t42" style="top:1095.25px;font-size:18px;line-height:21.6px;color:#8428fa;font-weight:700;left:309px;transform-origin:0 50%;transform:scaleX(0.9108);">Mapa de Desempenho da Equipe</span>
<span class="t" id="t43" style="top:613.25px;font-size:14px;line-height:16.8px;color:#5a5a5a;left:1216.2px;transform-origin:100% 50%;transform:translateX(-100%) scaleX(0.9894);">Bianca Costa</span>
<span class="t" id="t44" style="top:662.25px;font-size:14px;line-height:16.8px;color:#5a5a5a;left:1216.2px;transform-origin:100% 50%;transform:translateX(-100%) scaleX(0.9861);">Danilo SS</span>
<span class="t" id="t45" style="top:710.25px;font-size:14px;line-height:16.8px;color:#5a5a5a;left:1216.2px;transform-origin:100% 50%;transform:translateX(-100%) scaleX(0.9937);">Fernando Ribas</span>
<span class="t" id="t46" style="top:758.25px;font-size:14px;line-height:16.8px;color:#5a5a5a;left:1216.2px;transform-origin:100% 50%;transform:translateX(-100%) scaleX(0.9953);">Gabriel Silva</span>
<span class="t" id="t47" style="top:806.25px;font-size:14px;line-height:16.8px;color:#5a5a5a;left:1216.2px;transform-origin:100% 50%;transform:translateX(-100%) scaleX(0.9968);">Luiza Martins</span>
<span class="t" id="t48" style="top:854.25px;font-size:14px;line-height:16.8px;color:#5a5a5a;left:1216.2px;transform-origin:100% 50%;transform:translateX(-100%);">Natã Alves</span>
<span class="t" id="t49" style="top:898.25px;font-size:12px;line-height:14.4px;color:#555;left:1227.5px;transform-origin:50% 50%;transform:translateX(-50%);">0</span>
<span class="t" id="t50" style="top:898.25px;font-size:12px;line-height:14.4px;color:#555;left:1315.88px;transform-origin:50% 50%;transform:translateX(-50%);">6</span>
<span class="t" id="t51" style="top:898.25px;font-size:12px;line-height:14.4px;color:#555;left:1404.26px;transform-origin:50% 50%;transform:translateX(-50%);">12</span>
<span class="t" id="t52" style="top:898.25px;font-size:12px;line-height:14.4px;color:#555;left:1492.6399999999999px;transform-origin:50% 50%;transform:translateX(-50%);">18</span>
<span class="t" id="t53" style="top:898.25px;font-size:12px;line-height:14.4px;color:#555;left:1581.02px;transform-origin:50% 50%;transform:translateX(-50%);">24</span>
<span class="t" id="t54" style="top:898.25px;font-size:12px;line-height:14.4px;color:#555;left:1669.4px;transform-origin:50% 50%;transform:translateX(-50%);">30</span>
<span class="t" id="t55" style="top:898.25px;font-size:12px;line-height:14.4px;color:#555;left:1757.78px;transform-origin:50% 50%;transform:translateX(-50%);">36</span>
<span class="t" id="t56" style="top:898.25px;font-size:12px;line-height:14.4px;color:#555;left:1846.1599999999999px;transform-origin:50% 50%;transform:translateX(-50%);">42</span>
<span class="t" id="t57" style="top:590.25px;font-size:10.4px;line-height:12.48px;color:#111;left:333.3px;transform-origin:100% 50%;transform:translateX(-100%);-webkit-text-stroke:0.12px #111;">5</span>
<span class="t" id="t58" style="top:641.25px;font-size:10.4px;line-height:12.48px;color:#111;left:333.3px;transform-origin:100% 50%;transform:translateX(-100%);-webkit-text-stroke:0.12px #111;">4</span>
<span class="t" id="t59" style="top:692.25px;font-size:10.4px;line-height:12.48px;color:#111;left:333.3px;transform-origin:100% 50%;transform:translateX(-100%);-webkit-text-stroke:0.12px #111;">3</span>
<span class="t" id="t60" style="top:744.25px;font-size:10.4px;line-height:12.48px;color:#111;left:333.3px;transform-origin:100% 50%;transform:translateX(-100%);-webkit-text-stroke:0.12px #111;">2</span>
<span class="t" id="t61" style="top:795.25px;font-size:10.4px;line-height:12.48px;color:#111;left:333.3px;transform-origin:100% 50%;transform:translateX(-100%);-webkit-text-stroke:0.12px #111;">1</span>
<span class="t" id="t62" style="top:842.25px;font-size:10.4px;line-height:12.48px;color:#111;left:333.3px;transform-origin:100% 50%;transform:translateX(-100%);-webkit-text-stroke:0.12px #111;">0</span>
<span class="t" id="t63" style="top:857.25px;font-size:10.4px;line-height:12.48px;color:#111;left:343.2px;transform-origin:0 50%;transform:scaleX(0.9025);-webkit-text-stroke:0.12px #111;">Jul</span>
<span class="t" id="t64" style="top:857.25px;font-size:10.4px;line-height:12.48px;color:#111;left:517.1px;transform-origin:0 50%;transform:scaleX(0.8649);-webkit-text-stroke:0.12px #111;">Aug</span>
<span class="t" id="t65" style="top:857.25px;font-size:10.4px;line-height:12.48px;color:#111;left:692.5px;transform-origin:0 50%;transform:scaleX(0.8649);-webkit-text-stroke:0.12px #111;">Sep</span>
<span class="t" id="t66" style="top:857.25px;font-size:10.4px;line-height:12.48px;color:#111;left:869px;transform-origin:0 50%;transform:scaleX(0.8656);-webkit-text-stroke:0.12px #111;">Nov</span>
<span class="t" id="t67" style="top:857.25px;font-size:10.4px;line-height:12.48px;color:#111;left:1045px;transform-origin:0 50%;transform:scaleX(0.8926);-webkit-text-stroke:0.12px #111;">Dec</span>
<span class="t" id="t68" style="top:892.25px;font-size:12px;line-height:14.4px;color:#7b1fff;left:406.3px;transform-origin:0 50%;transform:scaleX(0.9835);">Luiza Martins</span>
<span class="t" id="t69" style="top:892.25px;font-size:12px;line-height:14.4px;color:#e63946;left:515.6px;transform-origin:0 50%;transform:scaleX(0.9907);">Fernando Ribas</span>
<span class="t" id="t70" style="top:892.25px;font-size:12px;line-height:14.4px;color:#44c76b;left:638.8px;transform-origin:0 50%;transform:scaleX(0.9836);">Danilo SS</span>
<span class="t" id="t71" style="top:892.25px;font-size:12px;line-height:14.4px;color:#f2c14e;left:730.2px;transform-origin:0 50%;transform:scaleX(0.9969);">Natã Alves</span>
<span class="t" id="t72" style="top:892.25px;font-size:12px;line-height:14.4px;color:#55a9f5;left:826px;transform-origin:0 50%;transform:scaleX(0.9947);">Bianca Costa</span>
<span class="t" id="t73" style="top:892.25px;font-size:12px;line-height:14.4px;color:#f23ccf;left:935.7px;transform-origin:0 50%;transform:scaleX(0.9863);">Gabriel Silva</span>
<span class="t" id="t74" style="top:1142.25px;font-size:14px;line-height:16.8px;color:#64718a;font-weight:700;left:324.7px;transform-origin:0 50%;transform:scaleX(0.9405);">Vendedor</span>
<span class="t" id="t75" style="top:1142.25px;font-size:14px;line-height:16.8px;color:#64718a;font-weight:700;left:829px;transform-origin:50% 50%;transform:translateX(-50%) scaleX(0.9746);">CONEXÃO</span>
<span class="t" id="t76" style="top:1142.25px;font-size:14px;line-height:16.8px;color:#64718a;font-weight:700;left:1126.6px;transform-origin:50% 50%;transform:translateX(-50%) scaleX(0.9820);">DIAGNÓSTICO</span>
<span class="t" id="t77" style="top:1142.25px;font-size:14px;line-height:16.8px;color:#64718a;font-weight:700;left:1424.2px;transform-origin:50% 50%;transform:translateX(-50%) scaleX(0.9256);">PRÓXIMOS PASSOS</span>
<span class="t" id="t78" style="top:1142.25px;font-size:14px;line-height:16.8px;color:#64718a;font-weight:700;left:1721.5px;transform-origin:50% 50%;transform:translateX(-50%) scaleX(0.9827);">Média</span>
<span class="t" id="t79" style="top:1188.25px;font-size:14px;line-height:16.8px;color:#d02828;font-weight:700;left:828.95px;transform-origin:50% 50%;transform:translateX(-50%);">3.3</span>
<span class="t" id="t80" style="top:1188.25px;font-size:14px;line-height:16.8px;color:#f47c06;font-weight:700;left:1126.45px;transform-origin:50% 50%;transform:translateX(-50%);">3.5</span>
<span class="t" id="t81" style="top:1188.25px;font-size:14px;line-height:16.8px;color:#2e7d32;font-weight:700;left:1423.95px;transform-origin:50% 50%;transform:translateX(-50%);">4.1</span>
<span class="t" id="t82" style="top:1188.25px;font-size:14px;line-height:16.8px;color:#f47c06;font-weight:700;left:1721.65px;transform-origin:50% 50%;transform:translateX(-50%);">3.6</span>
<span class="t" id="t83" style="top:1188.25px;font-size:14px;line-height:16.8px;color:#2a2a2a;left:316.8px;transform-origin:0 50%;transform:scaleX(0.9968);">Luiza Martins</span>
<span class="t" id="t84" style="top:1234.25px;font-size:14px;line-height:16.8px;color:#2e7d32;font-weight:700;left:828.95px;transform-origin:50% 50%;transform:translateX(-50%);">4.1</span>
<span class="t" id="t85" style="top:1234.25px;font-size:14px;line-height:16.8px;color:#2e7d32;font-weight:700;left:1126.45px;transform-origin:50% 50%;transform:translateX(-50%);">4.0</span>
<span class="t" id="t86" style="top:1234.25px;font-size:14px;line-height:16.8px;color:#2e7d32;font-weight:700;left:1423.95px;transform-origin:50% 50%;transform:translateX(-50%);">4.3</span>
<span class="t" id="t87" style="top:1234.25px;font-size:14px;line-height:16.8px;color:#2e7d32;font-weight:700;left:1721.65px;transform-origin:50% 50%;transform:translateX(-50%);">4.1</span>
<span class="t" id="t88" style="top:1234.25px;font-size:14px;line-height:16.8px;color:#2a2a2a;left:316.8px;transform-origin:0 50%;transform:scaleX(0.9486);">Fernando Ribas</span>
</div></div></body></html>
